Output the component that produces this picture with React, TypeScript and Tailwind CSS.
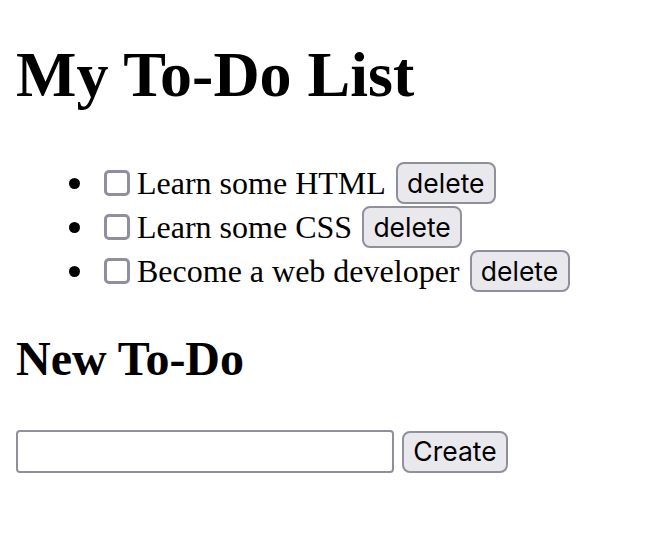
import React from "react";

const items = ["Learn some HTML", "Learn some CSS", "Become a web developer"];

export default function App() {
  return (
    <div className="min-h-[554px] bg-white px-[16px] pt-[38px] text-black [font-family:'Liberation_Serif','Times_New_Roman',serif]">
      <h1 className="text-[64px] font-bold leading-[74px]">My To-Do List</h1>
      <ul className="mt-[49px]">
        {items.map((t) => (
          <li key={t} className="flex h-[44px] items-center">
            <span className="ml-[53px] h-[11px] w-[11px] rounded-full bg-black" />
            <input
              type="checkbox"
              className="ml-[24px] h-[26px] w-[26px] appearance-none rounded-[5px] border-[3px] border-[#8f8f9d] bg-white"
            />
            <span className="ml-[7px] text-[32px] leading-[37px]">{t}</span>
            <button className="ml-[10px] flex h-[42px] w-[100px] items-center justify-center rounded-[8px] border-2 border-[#8f8f9d] bg-[#e9e9ed] text-[26.5px] leading-none [font-family:Inter,'Liberation_Sans',sans-serif]">
              delete
            </button>
          </li>
        ))}
      </ul>
      <h2 className="mt-[38px] text-[48px] font-bold leading-[56px]">New To-Do</h2>
      <div className="mt-[43px] flex items-center">
        <input
          type="text"
          className="h-[43px] w-[378px] rounded-[4px] border-2 border-[#8f8f9d] bg-white"
        />
        <button className="ml-[8px] flex h-[42px] w-[106px] items-center justify-center rounded-[8px] border-2 border-[#8f8f9d] bg-[#e9e9ed] text-[26.5px] leading-none [font-family:Inter,'Liberation_Sans',sans-serif]">
          Create
        </button>
      </div>
    </div>
  );
}
